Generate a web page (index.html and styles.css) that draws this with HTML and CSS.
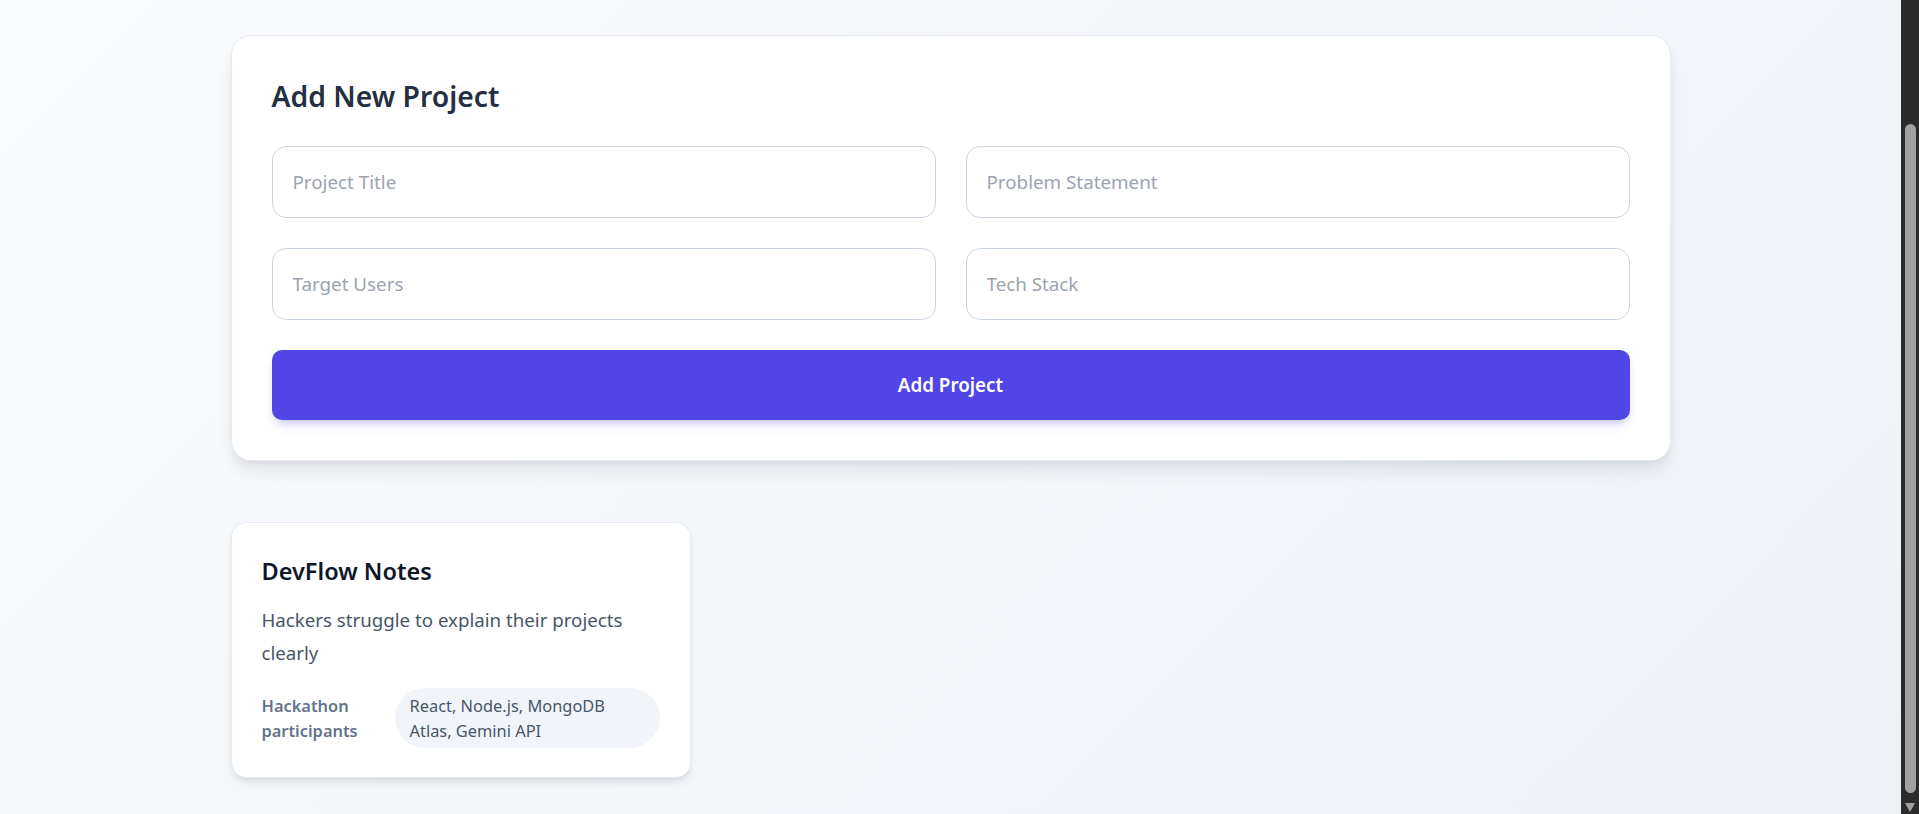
FILE: index.html
```html
<!DOCTYPE html>
<html lang="en">
<head>
<meta charset="utf-8">
<title>Projects</title>
<link rel="stylesheet" href="styles.css">
</head>
<body>
<div class="viewport">
  <main class="page">
    <section class="form-card">
      <h2 class="form-title">Add New Project</h2>
      <div class="form-grid">
        <input class="field" type="text" placeholder="Project Title">
        <input class="field" type="text" placeholder="Problem Statement">
        <input class="field" type="text" placeholder="Target Users">
        <input class="field" type="text" placeholder="Tech Stack">
      </div>
      <button class="submit" type="button">Add Project</button>
    </section>

    <section class="project-grid">
      <article class="project-card">
        <h3 class="project-title">DevFlow Notes</h3>
        <p class="project-desc">Hackers struggle to explain their projects clearly</p>
        <div class="project-meta">
          <span class="project-users">Hackathon participants</span>
          <span class="project-stack">React, Node.js, MongoDB Atlas, Gemini API</span>
        </div>
      </article>
    </section>
  </main>
</div>
<div class="scrollbar" aria-hidden="true">
  <div class="scroll-thumb"></div>
  <div class="scroll-arrow"></div>
</div>
</body>
</html>
```
FILE: styles.css
```css
* { box-sizing: border-box; }
html, body { height: 100%; }
body {
  margin: 0;
  height: 100vh;
  overflow: hidden;
  display: flex;
  font-family: "Noto Sans", "Open Sans", sans-serif;
  color: #1e293b;
  background: #2b2b2b;
}
.viewport {
  flex: 1;
  min-width: 0;
  overflow: hidden;
  background: linear-gradient(135deg, #f8fafc 0%, #eef2f7 100%);
}
.page {
  max-width: 1440px;
  margin: 0 auto;
  padding: 35px 0 0;
}
.form-card {
  background: #fff;
  border: 1px solid #e6eaf0;
  border-radius: 20px;
  padding: 40px 40px 40px;
  box-shadow: 0 12px 18px -4px rgba(15, 23, 42, 0.10), 0 4px 8px -4px rgba(15, 23, 42, 0.08);
  margin-bottom: 61px;
}
.form-title {
  margin: 0 0 30px;
  font-size: 28.3px;
  line-height: 40px;
  font-weight: 600;
  color: #243042;
}
.form-grid {
  display: grid;
  grid-template-columns: 1fr 1fr;
  gap: 30px;
  margin-bottom: 30px;
}
.field {
  display: block;
  width: 100%;
  height: 72px;
  padding: 0 20px;
  border: 1.25px solid #cbd5e1;
  border-radius: 14px;
  font: inherit;
  font-size: 18.8px;
  color: #1e293b;
  background: #fff;
  outline: none;
}
.field::placeholder { color: #9ca3af; }
.submit {
  display: block;
  width: 100%;
  height: 70px;
  border: 0;
  border-radius: 10px;
  background: #4f46e5;
  color: #fff;
  font: inherit;
  font-size: 18.8px;
  font-weight: 600;
  box-shadow: 0 8px 12px -4px rgba(79, 70, 229, 0.22), 0 3px 6px -2px rgba(15, 23, 42, 0.12);
}
.project-grid {
  display: grid;
  grid-template-columns: repeat(3, 1fr);
  gap: 30px;
}
.project-card {
  background: #fff;
  border: 1px solid #e6eaf0;
  border-radius: 15px;
  padding: 30px 30px 29px;
  box-shadow: 0 6px 10px -3px rgba(15, 23, 42, 0.12), 0 2px 4px -2px rgba(15, 23, 42, 0.08);
}
.project-title {
  margin: 0 0 15px;
  font-size: 23.5px;
  line-height: 36px;
  font-weight: 600;
  color: #0f172a;
}
.project-desc {
  margin: 0 0 19px;
  font-size: 18.7px;
  line-height: 32.5px;
  color: #475569;
}
.project-meta {
  display: flex;
  justify-content: space-between;
  align-items: center;
}
.project-users {
  font-size: 16.4px;
  line-height: 25px;
  font-weight: 600;
  color: #64748b;
}
.project-stack {
  font-size: 16.4px;
  line-height: 25px;
  padding: 5px 15px;
  background: #f1f5f9;
  border-radius: 999px;
  color: #475569;
}
.scrollbar {
  flex: 0 0 18px;
  display: flex;
  flex-direction: column;
  background: #2b2b2b;
}
.scroll-thumb {
  margin: 124px 3px 0 4px;
  height: 669px;
  border-radius: 6px;
  background: #a1a1a1;
}
.scroll-arrow {
  margin: auto 0 2px 4px;
  width: 0;
  height: 0;
  border-left: 5.5px solid transparent;
  border-right: 5.5px solid transparent;
  border-top: 9px solid #a1a1a1;
}
```
